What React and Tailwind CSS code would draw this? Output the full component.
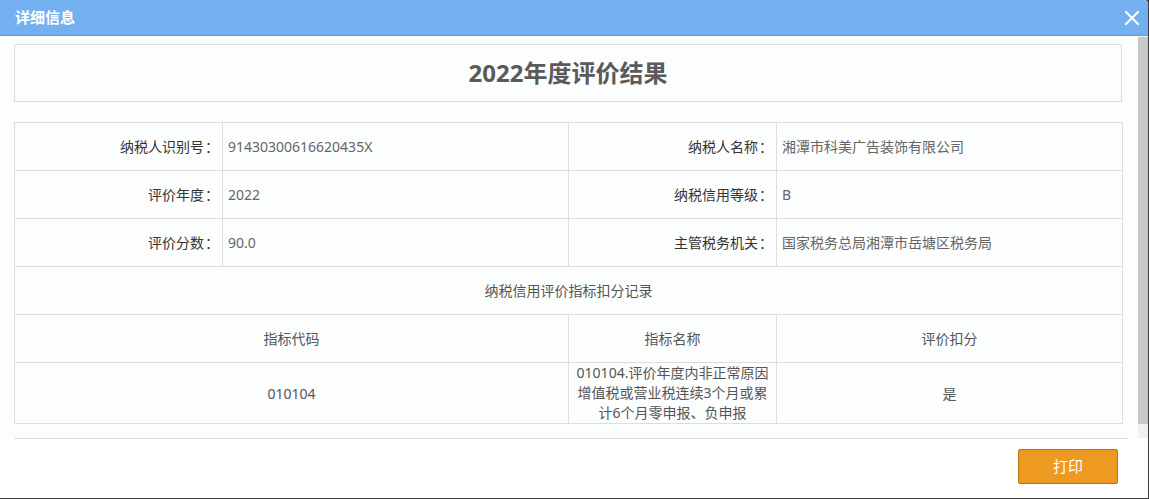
const FONT = { fontFamily: '"Noto Sans", "Noto Sans CJK SC", sans-serif' };

const INFO = [
  ["纳税人识别号", "91430300616620435X", "纳税人名称", "湘潭市科美广告装饰有限公司"],
  ["评价年度", "2022", "纳税信用等级", "B"],
  ["评价分数", "90.0", "主管税务机关", "国家税务总局湘潭市岳塘区税务局"],
];

function Label({ text }) {
  return (
    <td className="border border-[#dddddd] text-right pr-[2px] text-[#333333]">
      {text}
      <span className="inline-block w-[16px] text-center">：</span>
    </td>
  );
}

export default function App() {
  return (
    <div className="w-[1149px] h-[499px] bg-[#3c3c3c]" style={FONT}>
      <div className="w-[1148px] h-[498px] flex flex-col bg-white rounded-tr-[4px] overflow-hidden">
        {/* header */}
        <div className="h-[36px] shrink-0 flex items-center justify-between bg-[#74b0ef] border-b border-[#5c9de2] pl-[15px] pr-[9px]">
          <span className="text-white font-bold text-[15px] leading-none">详细信息</span>
          <svg width="14" height="14" viewBox="0 0 14 14" className="text-white">
            <path d="M1 1L13 13M13 1L1 13" stroke="currentColor" strokeWidth="2" strokeLinecap="square" />
          </svg>
        </div>

        {/* scroll area */}
        <div className="h-[402px] shrink-0 flex bg-[#fcfdfd]">
          <div className="flex-1 overflow-hidden pl-[14px] pr-[16px] pt-[8px]">
            <div className="h-[58px] border border-[#dddddd] flex items-center justify-center">
              <h1 className="text-[24px] font-bold text-[#5a5a5a] leading-none">2022年度评价结果</h1>
            </div>

            <table className="mt-[20px] w-[1108px] border-collapse table-fixed text-[14px]">
              <colgroup>
                <col className="w-[208px]" />
                <col className="w-[346px]" />
                <col className="w-[208px]" />
                <col className="w-[346px]" />
              </colgroup>
              <tbody>
                {INFO.map((r) => (
                  <tr key={r[0]} className="h-[48px]">
                    <Label text={r[0]} />
                    <td className="border border-[#dddddd] pl-[5px] text-[#666666]">{r[1]}</td>
                    <Label text={r[2]} />
                    <td className="border border-[#dddddd] pl-[5px] text-[#666666]">{r[3]}</td>
                  </tr>
                ))}
                <tr className="h-[48px]">
                  <td colSpan={4} className="border border-[#dddddd] text-center text-[#555555]">
                    纳税信用评价指标扣分记录
                  </td>
                </tr>
                <tr className="h-[48px]">
                  <td colSpan={2} className="border border-[#dddddd] text-center text-[#555555]">指标代码</td>
                  <td className="border border-[#dddddd] text-center text-[#555555]">指标名称</td>
                  <td className="border border-[#dddddd] text-center text-[#555555]">评价扣分</td>
                </tr>
                <tr className="h-[61px]">
                  <td colSpan={2} className="border border-[#dddddd] text-center text-[#555555]">010104</td>
                  <td className="border border-[#dddddd] text-center text-[#555555] px-[5px] py-0 leading-[20px]">
                    010104.评价年度内非正常原因增值税或营业税连续3个月或累计6个月零申报、负申报
                  </td>
                  <td className="border border-[#dddddd] text-center text-[#555555]">是</td>
                </tr>
              </tbody>
            </table>
          </div>

          {/* scrollbar */}
          <div className="w-[10px] flex flex-col bg-[#f1f1f1]">
            <div className="h-[387px] mt-[1px] bg-[#c8c8c8]" />
          </div>
        </div>

        {/* footer */}
        <div className="flex-1 bg-white">
          <div className="ml-[14px] mr-[20px] border-t border-[#dddddd] flex justify-end pt-[10px] pr-[10px]">
            <button className="w-[100px] h-[35px] bg-[#ee9a22] border border-[#b8740f] rounded-[2px] text-white text-[15px]">
              打印
            </button>
          </div>
        </div>
      </div>
    </div>
  );
}
